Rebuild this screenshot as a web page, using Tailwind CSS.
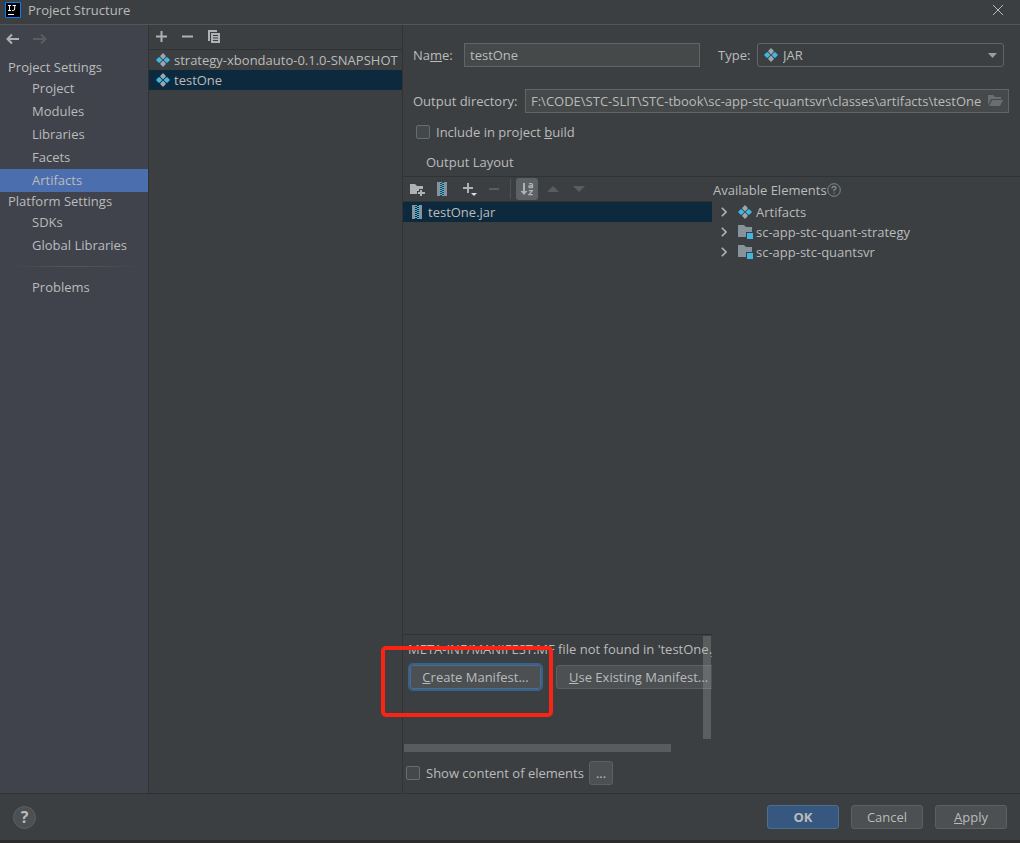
<!DOCTYPE html>
<html lang="en">
<head>
<meta charset="utf-8">
<meta name="viewport" content="width=device-width, initial-scale=1">
<title>Project Structure</title>
<script src="https://cdn.jsdelivr.net/npm/@tailwindcss/browser@4"></script>
</head>
<body class="flex min-h-screen flex-col bg-[#3c3f41] font-['Open_Sans','Noto_Sans',sans-serif] text-[13px] leading-5 text-[#bbbbbb]">

<svg class="hidden" aria-hidden="true">
  <symbol id="artifact" viewBox="0 0 14 14">
    <path fill="#9aa7b0" d="M7 0 9.700 2.700v1L7 6.400 4.300 3.700v-1zM7 7.600l2.700 2.700v1L7 14l-2.700-2.700v-1z"/>
    <path fill="#40b6e0" d="M0 7l2.700-2.700h1L6.400 7 3.700 9.700h-1zM7.600 7l2.700-2.700h1L14 7l-2.700 2.700h-1z"/>
  </symbol>
  <symbol id="jar" viewBox="0 0 10 14">
    <path fill="#87939a" d="M0 0h3v14H0zM7 0h3v14H7z"/>
    <path fill="#40b6e0" d="M3 0h2v1H3zM5 1h2v1H5zM3 2h2v1H3zM5 3h2v1H5zM3 4h2v1H3zM5 5h2v1H5zM3 6h2v1H3zM5 7h2v1H5zM3 8h2v1H3zM5 9h2v1H5zM3 10h2v1H3zM5 11h2v1H5zM3 12h2v1H3zM5 13h2v1H5z"/>
  </symbol>
  <symbol id="module" viewBox="0 0 16 14">
    <path fill="#87939a" d="M0 0h6l2 2h6v5H8v5H0z"/>
    <path fill="#40b6e0" d="M9 8h6v6H9z"/>
  </symbol>
  <symbol id="chevron" viewBox="0 0 6 10">
    <path fill="none" stroke="#afb1b3" stroke-width="1.6" d="M.8.8 5 5 .8 9.2"/>
  </symbol>
</svg>

<header class="flex h-[25px] items-center border-b border-[#555555] pr-4 pb-1 pl-[5px]">
  <svg class="size-4" viewBox="0 0 16 16" aria-hidden="true">
    <path fill="#000" stroke="#087cfa" d="M.5.5h15v15H.5z"/>
    <path fill="none" stroke="#fff" d="M3 3.500h3M4.500 3.500v5M3 8.500h3M7.500 3.500h3.500M9.700 3.500v3.500q0 1.500-1.500 1.500h-1"/>
    <path fill="#fff" d="M3 12h6v1H3z"/>
  </svg>
  <h1 class="ml-[7px] flex-1">Project Structure</h1>
  <button type="button" aria-label="Close"><svg class="size-3" viewBox="0 0 12 12"><path fill="none" stroke="#bbb" d="m1 1 10 10M11 1 1 11"/></svg></button>
</header>

<div class="flex flex-1">
  <nav class="flex w-[149px] shrink-0 flex-col border-r border-[#323232] bg-[#40434c]">
    <div class="flex h-8 items-start gap-[13px] pt-2 pl-[6px]">
      <button type="button" aria-label="Back"><svg class="h-3 w-[14px]" viewBox="0 0 14 12"><path fill="none" stroke="#afb1b3" stroke-width="2" d="M13 6H2M6 1.500 1.500 6 6 10.500"/></svg></button>
      <button type="button" aria-label="Forward" disabled><svg class="h-3 w-[14px]" viewBox="0 0 14 12"><path fill="none" stroke="#5a5d5f" stroke-width="2" d="M0 6h12M8 1.500 12.500 6 8 10.500"/></svg></button>
    </div>
    <h2 class="h-5 pl-2 leading-5">Project Settings</h2>
    <a href="#" class="h-[23px] pl-8 leading-[23px]">Project</a>
    <a href="#" class="h-[23px] pl-8 leading-[23px]">Modules</a>
    <a href="#" class="h-[23px] pl-8 leading-[23px]">Libraries</a>
    <a href="#" class="h-[23px] pl-8 leading-[23px]">Facets</a>
    <a href="#" aria-current="page" class="h-[23px] bg-[#4b6eaf] pl-8 leading-[23px]">Artifacts</a>
    <h2 class="h-[19px] pl-2 leading-[19px]">Platform Settings</h2>
    <a href="#" class="h-[23px] pl-8 leading-[23px]">SDKs</a>
    <a href="#" class="h-[23px] pl-8 leading-[23px]">Global Libraries</a>
    <div class="mx-2 my-[9px] h-px bg-linear-to-r from-transparent via-[#5a5654] to-transparent"></div>
    <a href="#" class="h-[23px] pl-8 leading-[23px]">Problems</a>
  </nav>

  <section class="w-[254px] shrink-0 border-r border-[#323232]" aria-label="Artifacts">
    <div class="flex h-[25px] items-center gap-[15px] border-b border-[#323232] pb-px pl-[7px]">
      <button type="button" aria-label="Add"><svg class="size-[11px]" viewBox="0 0 11 11"><path fill="#afb1b3" d="M4.500 0h2v4.500H11v2H6.500V11h-2V6.500H0v-2h4.500z"/></svg></button>
      <button type="button" aria-label="Remove"><svg class="size-[11px]" viewBox="0 0 11 11"><path fill="#afb1b3" d="M0 4.500h11v2H0z"/></svg></button>
      <button type="button" aria-label="Copy"><svg class="h-[13px] w-3" viewBox="0 0 12 13"><path fill="#afb1b3" d="M0 0h9v2H2v9H0z"/><path fill="#afb1b3" d="M3 3h9v10H3z"/><path fill="#3c3f41" d="M5 5h5v1H5zM5 7.500h5v1H5zM5 10h5v1H5z"/></svg></button>
    </div>
    <ul>
      <li class="flex h-5 items-center gap-1 pl-[7px]"><svg class="size-[14px]"><use href="#artifact"/></svg>strategy-xbondauto-0.1.0-SNAPSHOT</li>
      <li class="flex h-5 items-center gap-1 bg-[#0d293e] pl-[7px]"><svg class="size-[14px]"><use href="#artifact"/></svg>testOne</li>
    </ul>
  </section>

  <main class="flex min-w-0 flex-1 flex-col">
    <div class="flex h-[152px] flex-col border-b border-[#323232] pt-[18px] pl-[10px]">
      <div class="flex h-6 items-center pr-4">
        <label for="name" class="w-[51px]">Na<u>m</u>e:</label>
        <input id="name" value="testOne" class="h-6 w-[236px] border border-[#646464] bg-[#45494a] px-[5px]">
        <label for="type" class="ml-[18px] w-[39px]">Type:</label>
        <div class="relative flex-1">
          <select id="type" class="block h-6 w-full appearance-none rounded-[3px] border border-[#646464] bg-[#3c3f41] pl-[25px]"><option>JAR</option></select>
          <svg class="pointer-events-none absolute top-[5px] left-[7px] size-[14px]"><use href="#artifact"/></svg>
          <svg class="pointer-events-none absolute top-[10px] right-[7px] h-[5px] w-[9px]" viewBox="0 0 9 5"><path fill="#9c9ea0" d="M0 0h9L4.500 5z"/></svg>
        </div>
      </div>
      <div class="mt-[22px] flex h-6 items-center pr-[11px]">
        <label for="outdir" class="w-[112px]">Output directory:</label>
        <div class="flex h-6 flex-1 items-center border border-[#646464] bg-[#45494a] pr-[5px]">
          <input id="outdir" value="F:\CODE\STC-SLIT\STC-tbook\sc-app-stc-quantsvr\classes\artifacts\testOne" class="min-w-0 flex-1 bg-transparent pl-[5px]">
          <button type="button" aria-label="Browse"><svg class="h-3 w-[15px]" viewBox="0 0 15 12"><path fill="#6a6e71" d="M0 0h5l2 2h6v2H3L0 10zM4 5h11l-3 6H1z"/></svg></button>
        </div>
      </div>
      <label class="mt-[9px] flex h-5 items-center gap-[6px] pl-[3px]"><input type="checkbox" class="size-[14px] appearance-none rounded-[2px] border border-[#6b6b6b] bg-[#43494a]"><span>Include in project <u>b</u>uild</span></label>
      <h2 class="mt-[10px] pl-[13px]">Output Layout</h2>
    </div>

    <div class="flex flex-1">
      <section class="flex w-[309px] shrink-0 flex-col" aria-label="Output Layout">
        <div class="flex h-[25px] items-center border-b border-[#323232] pl-[7px]">
          <button type="button" aria-label="New folder"><svg class="h-[13px] w-[15px]" viewBox="0 0 15 13"><path fill="#afb1b3" d="M0 1h5l2 2h6v3H9v2H7v3H0z"/><path fill="#afb1b3" d="M10 7h2v2h3v2h-3v2h-2v-2H8V9h2z"/></svg></button>
          <button type="button" aria-label="New archive" class="ml-3"><svg class="h-[14px] w-[10px]"><use href="#jar"/></svg></button>
          <button type="button" aria-label="Add copy of" class="ml-4"><svg class="h-[14px] w-[14px]" viewBox="0 0 14 14"><path fill="#afb1b3" d="M4 1h2v4h4v2H6v4H4V7H0V5h4z"/><path fill="#ddd" d="M8 11h6l-3 3z"/></svg></button>
          <button type="button" aria-label="Remove" disabled class="ml-3"><svg class="h-[2px] w-[10px]" viewBox="0 0 10 2"><path fill="#5a5d5f" d="M0 0h10v2H0z"/></svg></button>
          <span class="ml-[11px] h-5 w-px bg-[#515151]"></span>
          <button type="button" aria-label="Sort by name" aria-pressed="true" class="ml-[5px] flex size-[22px] items-center justify-center rounded-[3px] bg-[#5c6164]"><svg class="size-[14px]" viewBox="0 0 14 14"><path fill="#afb1b3" d="M3 1h2v8h2.500L4 13 .5 9H3z"/><path fill="none" stroke="#afb1b3" stroke-width="1.300" d="M9 1.700h2.500q1 0 1 1V6M12.500 3.700H9.800q-1 0-1 .9 0 .9 1 .9h2.700M8.800 8.700h3.500l-3.300 4h3.900"/></svg></button>
          <button type="button" aria-label="Move up" disabled class="ml-[9px]"><svg class="h-[6px] w-3" viewBox="0 0 12 6"><path fill="#5a5d5f" d="M0 6h12L6 0z"/></svg></button>
          <button type="button" aria-label="Move down" disabled class="ml-[14px]"><svg class="h-[6px] w-3" viewBox="0 0 12 6"><path fill="#5a5d5f" d="M0 0h12L6 6z"/></svg></button>
        </div>
        <div class="flex h-5 items-center gap-[6px] bg-[#0d293e] pl-[9px]"><svg class="h-[14px] w-[10px]"><use href="#jar"/></svg>testOne.jar</div>
        <div class="flex-1"></div>

        <div class="relative h-[118px] border-t border-[#323232]">
          <div class="h-full overflow-hidden pt-1 pl-[5px] whitespace-nowrap">
            <p>META-INF/MANIFEST.MF file not found in 'testOne.jar'</p>
            <div class="mt-[6px] flex gap-[15px] pl-[2px]">
              <button type="button" class="h-6 w-[131px] shrink-0 rounded-[3px] border border-[#466d94] bg-[#4c5052] outline-2 outline-[#3d6185]"><u>C</u>reate Manifest...</button>
              <button type="button" class="h-6 shrink-0 rounded-[3px] border border-[#5e6060] bg-[#4c5052] px-3"><u>U</u>se Existing Manifest...</button>
            </div>
          </div>
          <div class="absolute top-px right-px h-[103px] w-2 bg-[#a6a6a6]/30"></div>
          <div class="absolute bottom-0 left-px h-2 w-[267px] bg-[#595b5d]"></div>
          <div class="absolute top-[11px] left-[-22px] h-[71px] w-[172px] rounded-[5px] border-4 border-[#fb2314]"></div>
        </div>
        <div class="flex h-[41px] items-center pl-[3px]">
          <label class="flex w-[183px] items-center gap-[6px] whitespace-nowrap"><input type="checkbox" class="size-[14px] appearance-none rounded-[2px] border border-[#6b6b6b] bg-[#43494a]">Show content of elements</label>
          <button type="button" aria-label="Content options" class="size-6 rounded-[3px] border border-[#5e6060] bg-[#4c5052]">...</button>
        </div>
      </section>

      <section class="min-w-0 flex-1" aria-label="Available Elements">
        <h2 class="flex h-[25px] items-center pl-px">Available Elements<svg class="size-[14px]" viewBox="0 0 14 14" aria-hidden="true"><circle cx="7" cy="7" r="6.300" fill="none" stroke="#7f8b91"/><path fill="none" stroke="#7f8b91" stroke-width="1.300" d="M5 5.500q0-2 2-2t2 1.800Q9 6.300 7 7.200v1M7 9.500v1.300"/></svg></h2>
        <ul>
          <li class="flex h-5 items-center pl-[9px]"><svg class="h-[10px] w-[6px]"><use href="#chevron"/></svg><svg class="ml-[11px] size-[14px]"><use href="#artifact"/></svg><span class="ml-1">Artifacts</span></li>
          <li class="flex h-5 items-center pl-[9px]"><svg class="h-[10px] w-[6px]"><use href="#chevron"/></svg><svg class="ml-[11px] h-[14px] w-4"><use href="#module"/></svg><span class="ml-[2px]">sc-app-stc-quant-strategy</span></li>
          <li class="flex h-5 items-center pl-[9px]"><svg class="h-[10px] w-[6px]"><use href="#chevron"/></svg><svg class="ml-[11px] h-[14px] w-4"><use href="#module"/></svg><span class="ml-[2px]">sc-app-stc-quantsvr</span></li>
        </ul>
      </section>
    </div>
  </main>
</div>

<footer class="border-t border-[#323232]">
  <div class="flex h-[46px] items-center gap-3 px-[13px]">
    <button type="button" aria-label="Help" class="mr-auto flex size-[23px] items-center justify-center rounded-full border border-[#5e6060] bg-[#4c5052] text-base font-bold">?</button>
    <button type="button" class="h-6 w-[72px] rounded-[3px] border border-[#4c708c] bg-[#365880] font-bold">OK</button>
    <button type="button" class="h-6 w-[72px] rounded-[3px] border border-[#5e6060] bg-[#4c5052]">Cancel</button>
    <button type="button" class="h-6 w-[72px] rounded-[3px] border border-[#5e6060] bg-[#4c5052]"><u>A</u>pply</button>
  </div>
  <div class="h-[3px] bg-[#2b2b2b]"></div>
</footer>
</body>
</html>
